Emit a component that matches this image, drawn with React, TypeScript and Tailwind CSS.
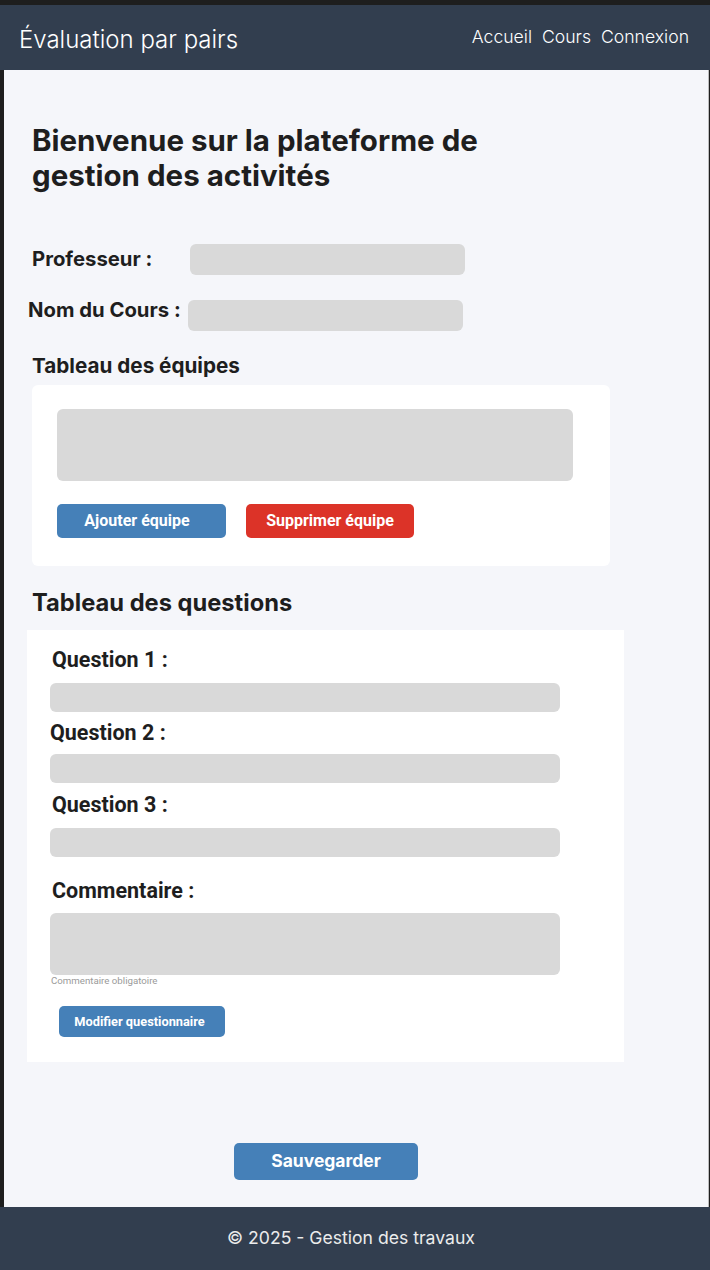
import React from 'react'

const inter = { fontFamily: 'Inter, "Noto Sans", sans-serif' }
const roboto = { fontFamily: 'Roboto, "Noto Sans", sans-serif' }

function Field({ label, className = '' }: { label: string; className?: string }) {
  return (
    <div className={className}>
      <div className="text-[21.5px] leading-[24px] font-bold text-[#1e1e1e]" style={roboto}>
        {label}
      </div>
    </div>
  )
}

export default function App() {
  return (
    <div className="w-[710px] bg-[#1e1e1e] pt-[5px]" style={inter}>
      {/* En-tête */}
      <header className="h-[65px] bg-[#323e4f] flex items-center justify-between pl-[19px] pr-[21px]">
        <h1 className="text-[24px] font-light text-white mt-[4px]">Évaluation par pairs</h1>
        <nav className="flex gap-[10px] text-[17.6px] font-light text-white">
          <a>Accueil</a>
          <a>Cours</a>
          <a>Connexion</a>
        </nav>
      </header>

      <main className="ml-[4px] w-[705px] bg-[#f5f6fa] border-r border-[#bdbdbd] pt-[53px] pb-[27px] text-[#1e1e1e]">
        <h2 className="pl-[28px] text-[29.5px] leading-[35px] font-bold">
          Bienvenue sur la plateforme de
          <br />
          gestion des activités
        </h2>

        {/* Professeur / Cours */}
        <div className="mt-[51px] flex items-center pl-[28px]">
          <span className="w-[158px] text-[20.3px] font-bold">Professeur :</span>
          <div className="w-[275px] h-[31px] rounded-[6px] bg-[#d9d9d9]" />
        </div>
        <div className="mt-[25px] flex items-start pl-[24px]">
          <span className="w-[160px] text-[20.3px] leading-[20px] font-bold">Nom du Cours :</span>
          <div className="w-[275px] h-[31px] rounded-[6px] bg-[#d9d9d9]" />
        </div>

        {/* Équipes */}
        <h3 className="mt-[21px] pl-[28px] text-[20.7px] leading-[28px] font-bold">Tableau des équipes</h3>
        <section className="mt-[5px] ml-[28px] w-[578px] rounded-[6px] bg-white pt-[24px] pb-[28px] pl-[25px]">
          <div className="w-[516px] h-[72px] rounded-[6px] bg-[#d9d9d9]" />
          <div className="mt-[23px] flex gap-[20px]" style={roboto}>
            <button className="w-[169px] h-[34px] rounded-[5px] bg-[#4580b8] pr-[9px] text-white text-[16px] font-bold">
              Ajouter équipe
            </button>
            <button className="w-[168px] h-[34px] rounded-[5px] bg-[#dc3328] text-white text-[16px] font-bold">
              Supprimer équipe
            </button>
          </div>
        </section>

        {/* Questions */}
        <h3 className="mt-[22px] pl-[28px] text-[23.7px] leading-[30px] font-bold">Tableau des questions</h3>
        <section className="mt-[12px] ml-[23px] w-[597px] bg-white pt-[18px] pb-[25px] pl-[23px]">
          <Field label="Question 1 :" className="pl-[2px]" />
          <div className="mt-[11px] w-[510px] h-[29px] rounded-[6px] bg-[#d9d9d9]" />
          <Field label="Question 2 :" className="mt-[9px]" />
          <div className="mt-[9px] w-[510px] h-[29px] rounded-[6px] bg-[#d9d9d9]" />
          <Field label="Question 3 :" className="mt-[10px] pl-[2px]" />
          <div className="mt-[11px] w-[510px] h-[29px] rounded-[6px] bg-[#d9d9d9]" />
          <Field label="Commentaire :" className="mt-[22px] pl-[2px]" />
          <div className="mt-[10px] w-[510px] h-[62px] rounded-[6px] bg-[#d9d9d9]" />
          <div className="mt-[1px] pl-[1px] text-[9.7px] leading-[10px] text-[#9a9a9a]" style={roboto}>
            Commentaire obligatoire
          </div>
          <button
            className="mt-[20px] ml-[9px] w-[166px] h-[31px] rounded-[5px] bg-[#4580b8] pr-[5px] text-white text-[12.8px] font-bold"
            style={roboto}
          >
            Modifier questionnaire
          </button>
        </section>

        <div className="mt-[81px] pl-[230px]">
          <button className="w-[184px] h-[37px] rounded-[5px] bg-[#4580b8] text-white text-[17.5px] font-bold">
            Sauvegarder
          </button>
        </div>
      </main>

      <footer className="h-[63px] bg-[#323e4f] flex items-center justify-center">
        <p className="text-[17.6px] text-[#ececec] -ml-[8px]">© 2025 - Gestion des travaux</p>
      </footer>
    </div>
  )
}
